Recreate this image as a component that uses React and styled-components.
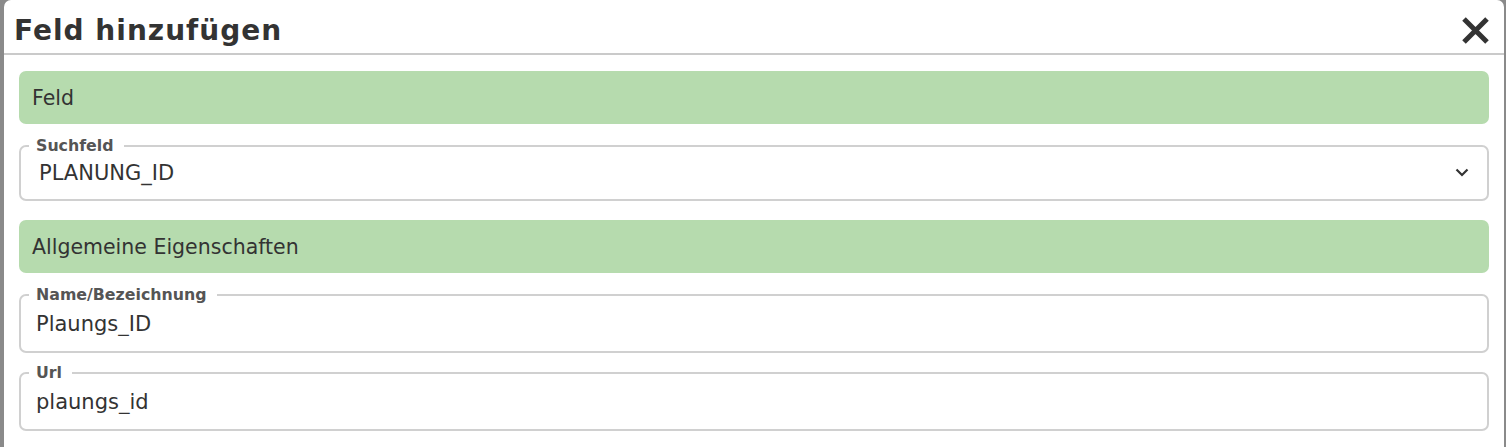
import React from 'react';
import styled, { createGlobalStyle } from 'styled-components';

const GlobalStyle = createGlobalStyle`
  html, body {
    margin: 0;
    padding: 0;
    background: #8a8a8a;
  }
  body {
    font-family: "DejaVu Sans", Verdana, sans-serif;
    color: #333;
  }
`;

const Backdrop = styled.div`
  width: 1506px;
  height: 447px;
  overflow: hidden;
  padding-left: 4px;
  box-sizing: border-box;
`;

const Modal = styled.div`
  width: 1500px;
  min-height: 447px;
  background: #fff;
  border-radius: 7px 7px 0 0;
`;

const Header = styled.div`
  display: flex;
  align-items: center;
  justify-content: space-between;
  height: 53px;
  padding: 0 14px 0 10px;
  border-bottom: 2px solid #cacaca;
`;

const Title = styled.h2`
  margin: 0;
  padding-top: 7px;
  font-size: 28px;
  font-weight: bold;
  letter-spacing: 1px;
  color: #333;
`;

const CloseButton = styled.button`
  display: flex;
  padding: 0;
  margin-top: 7px;
  border: none;
  background: none;
  cursor: pointer;
`;

const Body = styled.div`
  padding: 16px 15px 0 15px;
`;

const Section = styled.div`
  display: flex;
  align-items: center;
  height: 53px;
  padding: 0 13px;
  margin-top: ${p => p.$top || 0}px;
  background: #b6dbae;
  border-radius: 7px;
  font-size: 20.5px;
  color: #333;
`;

const Field = styled.fieldset`
  margin: ${p => p.$top}px 0 0 0;
  padding: 0;
  border: 2px solid #d0d0d0;
  border-radius: 7px;
  min-width: 0;
`;

const Legend = styled.legend`
  margin-left: 8px;
  padding: 0 10px 0 7px;
  font-size: 15.8px;
  line-height: 16px;
  font-weight: bold;
  color: #555;
`;

const SelectBox = styled.div`
  display: flex;
  align-items: center;
  justify-content: space-between;
  box-sizing: border-box;
  height: 45px;
  padding: 0 18px 8px 18px;
  font-size: 21px;
  color: #333;
`;

const Input = styled.input`
  display: block;
  width: 100%;
  height: 48px;
  box-sizing: border-box;
  padding: 0 15px 6px 15px;
  border: none;
  outline: none;
  background: transparent;
  font-family: "DejaVu Sans", Verdana, sans-serif;
  font-size: 21px;
  color: #333;
`;

const Chevron = () => (
  <svg width="14" height="9" viewBox="0 0 14 9">
    <path d="M1.5 1.5 L7 7 L12.5 1.5" fill="none" stroke="#333" strokeWidth="2.2" />
  </svg>
);

const CloseIcon = () => (
  <svg width="29" height="29" viewBox="0 0 29 29">
    <path d="M3 3 L26 26 M26 3 L3 26" stroke="#333" strokeWidth="5" strokeLinecap="butt" />
  </svg>
);

export default function App() {
  return (
    <>
      <GlobalStyle />
      <Backdrop>
        <Modal>
          <Header>
            <Title>Feld hinzufügen</Title>
            <CloseButton aria-label="Schließen">
              <CloseIcon />
            </CloseButton>
          </Header>
          <Body>
            <Section>Feld</Section>
            <Field $top={14}>
              <Legend>Suchfeld</Legend>
              <SelectBox>
                <span>PLANUNG_ID</span>
                <Chevron />
              </SelectBox>
            </Field>
            <Section $top={19}>Allgemeine Eigenschaften</Section>
            <Field $top={14}>
              <Legend>Name/Bezeichnung</Legend>
              <Input defaultValue="Plaungs_ID" />
            </Field>
            <Field $top={12}>
              <Legend>Url</Legend>
              <Input defaultValue="plaungs_id" />
            </Field>
          </Body>
        </Modal>
      </Backdrop>
    </>
  );
}
